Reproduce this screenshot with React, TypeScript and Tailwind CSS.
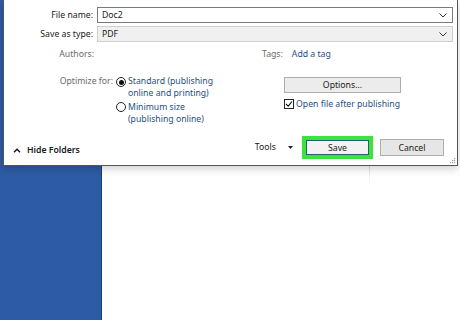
import React from "react";

const Chevron = () => (
  <svg width="8" height="5" viewBox="0 0 8 5" className="block">
    <path d="M0.5 0.5 L4 4 L7.5 0.5" fill="none" stroke="#333" strokeWidth="1" />
  </svg>
);

export default function App() {
  return (
    <div className="relative w-[460px] h-[320px] overflow-hidden bg-white font-['Noto_Sans',sans-serif] text-[8.7px] text-[#1a1a1a]">
      <div className="flex h-full">
        <div className="w-[102px] h-full bg-[#2d5ba5] border-r border-[#1c3d70]" />
        <div className="flex-1 h-full bg-white">
          <div className="mt-[166px] ml-[267px] w-px h-[20px] bg-gradient-to-b from-[#dcdcdc] to-white" />
        </div>
      </div>

      <div className="absolute left-[3px] top-0 w-[455px] h-[166px] bg-white border-l border-r border-b border-[#555] shadow-[0_3px_8px_rgba(0,0,0,0.18)] flex flex-col">
        {/* File name */}
        <div className="flex items-center mt-[7px]">
          <div className="w-[89px] text-right leading-[12px]">File name:</div>
          <div className="ml-[4px] w-[356px] h-[16px] border border-[#7a7a7a] bg-white flex items-center pl-[4px] pr-[5px]">
            <span className="flex-1 leading-[12px]">Doc2</span>
            <Chevron />
          </div>
        </div>
        {/* Save as type */}
        <div className="flex items-center mt-[3px]">
          <div className="w-[89px] text-right leading-[12px]">Save as type:</div>
          <div className="ml-[4px] w-[356px] h-[16px] border border-[#cfcfcf] bg-[#f0f0f0] flex items-center pl-[4px] pr-[5px]">
            <span className="flex-1 leading-[12px]">PDF</span>
            <Chevron />
          </div>
        </div>
        {/* Authors / Tags */}
        <div className="flex items-center mt-[6px] h-[12px] leading-[12px]">
          <div className="w-[90px] text-right text-[#6b6b6b]">Authors:</div>
          <div className="ml-[168px] text-[#6b6b6b]">Tags:</div>
          <div className="ml-[9px] text-[#1f4f86]">Add a tag</div>
        </div>
        {/* Optimize */}
        <div className="flex mt-[15px]">
          <div className="w-[109px] text-right text-[#6b6b6b] leading-[12px]">Optimize for:</div>
          <div className="ml-[3px] flex flex-col gap-[2px] w-[168px]">
            <div className="flex">
              <div className="mt-[2px] w-[10px] h-[10px] rounded-full border border-[#222] flex items-center justify-center">
                <div className="w-[5px] h-[5px] rounded-full bg-[#111]" />
              </div>
              <div className="ml-[2px] leading-[12px] text-[#1f4f86]">
                Standard (publishing
                <br />
                online and printing)
              </div>
            </div>
            <div className="flex">
              <div className="mt-[1px] w-[10px] h-[10px] rounded-full border border-[#222]" />
              <div className="ml-[2px] leading-[12px] text-[#1f4f86]">
                Minimum size
                <br />
                (publishing online)
              </div>
            </div>
          </div>
          <div className="flex flex-col mt-[2px]">
            <div className="w-[117px] h-[16px] border border-[#adadad] bg-[#ececec] flex items-center justify-center leading-[12px]">
              Options...
            </div>
            <div className="flex items-center mt-[5px]">
              <div className="w-[10px] h-[10px] border border-[#222] bg-white flex items-center justify-center">
                <svg width="8" height="8" viewBox="0 0 8 8">
                  <path d="M1 4 L3.2 6.2 L7 1.5" fill="none" stroke="#111" strokeWidth="1.1" />
                </svg>
              </div>
              <div className="ml-[2px] leading-[12px] text-[#1f4f86]">Open file after publishing</div>
            </div>
          </div>
        </div>
        {/* Bottom bar */}
        <div className="mt-auto h-[29px] flex items-start relative">
          <div className="flex items-center mt-[8px] ml-[9px] leading-[12px] font-semibold">
            <svg width="8" height="5" viewBox="0 0 8 5" className="block">
              <path d="M1 4.2 L4 1.2 L7 4.2" fill="none" stroke="#111" strokeWidth="1.4" />
            </svg>
            <span className="ml-[6px]">Hide Folders</span>
          </div>
          <div className="ml-auto mr-[13px] flex items-start">
            <div className="mt-[5px] leading-[12px]">Tools</div>
            <svg width="5" height="3" viewBox="0 0 5 3" className="mt-[10px] ml-[12px]">
              <path d="M0 0 L5 0 L2.5 3 Z" fill="#222" />
            </svg>
            <div className="ml-[9px] border-[4px] border-[#3de33d]">
              <div className="w-[63px] h-[15px] border border-[#2a5c70] bg-[#f2f2f2] flex items-center justify-center leading-[12px]">
                Save
              </div>
            </div>
            <div className="ml-[7px] mt-[3px] w-[64px] h-[17px] border border-[#adadad] bg-[#e6e6e6] flex items-center justify-center leading-[12px]">
              Cancel
            </div>
          </div>
          <svg width="6" height="6" viewBox="0 0 6 6" className="absolute right-[1px] bottom-[1px]">
            <rect x="4" y="0" width="1.2" height="1.2" fill="#999" />
            <rect x="2" y="2" width="1.2" height="1.2" fill="#999" />
            <rect x="4" y="2" width="1.2" height="1.2" fill="#999" />
            <rect x="0" y="4" width="1.2" height="1.2" fill="#999" />
            <rect x="2" y="4" width="1.2" height="1.2" fill="#999" />
            <rect x="4" y="4" width="1.2" height="1.2" fill="#999" />
          </svg>
        </div>
      </div>
    </div>
  );
}
